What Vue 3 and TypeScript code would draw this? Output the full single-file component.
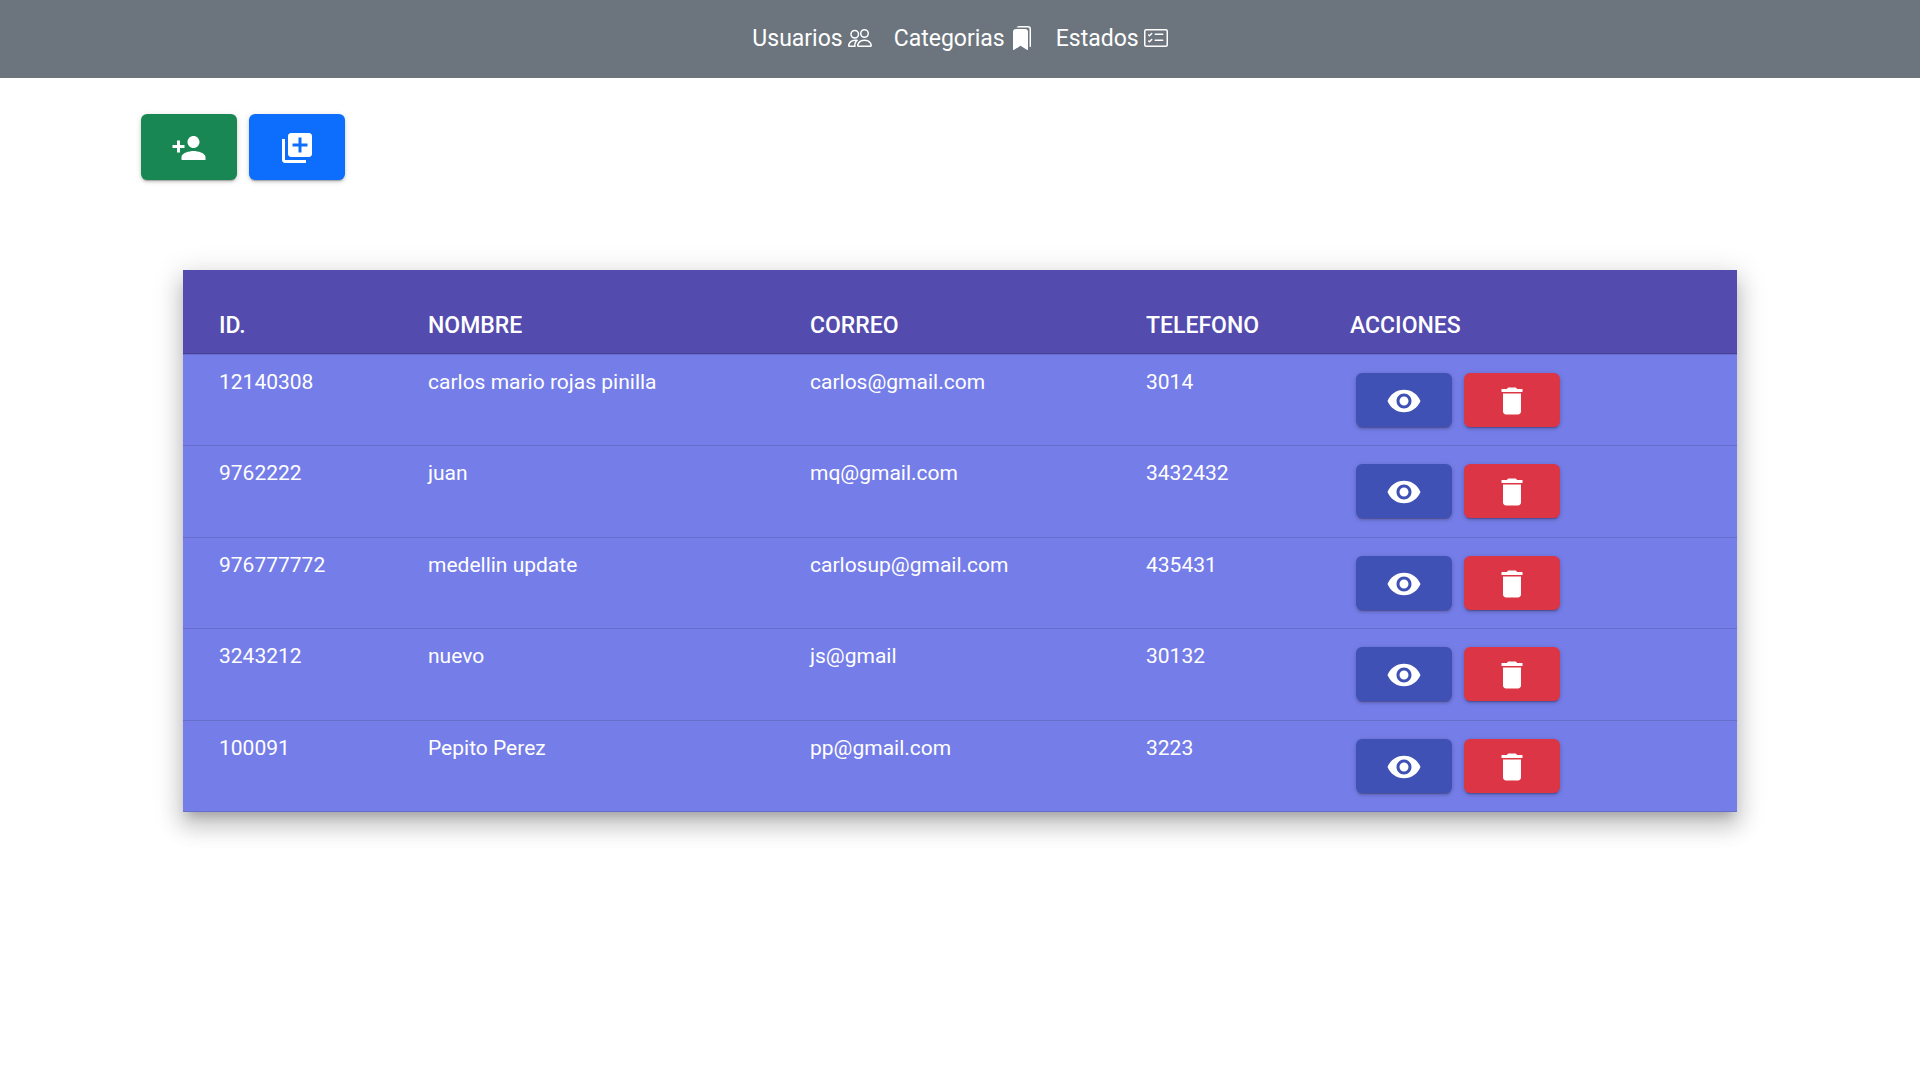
<script setup lang="ts">
interface Usuario {
  id: string
  nombre: string
  correo: string
  telefono: string
}

const usuarios: Usuario[] = [
  { id: '12140308', nombre: 'carlos mario rojas pinilla', correo: 'carlos@gmail.com', telefono: '3014' },
  { id: '9762222', nombre: 'juan', correo: 'mq@gmail.com', telefono: '3432432' },
  { id: '976777772', nombre: 'medellin update', correo: 'carlosup@gmail.com', telefono: '435431' },
  { id: '3243212', nombre: 'nuevo', correo: 'js@gmail', telefono: '30132' },
  { id: '100091', nombre: 'Pepito Perez', correo: 'pp@gmail.com', telefono: '3223' },
]
</script>

<template>
  <nav class="navbar">
    <a href="#usuarios" class="nav-link">
      Usuarios
      <svg class="nav-icon" viewBox="0 0 16 16" aria-hidden="true">
        <path fill="currentColor" d="M15 14s1 0 1-1-1-4-5-4-5 3-5 4 1 1 1 1h8zm-7.978-1A.261.261 0 0 1 7 12.996c.001-.264.167-1.030.760-1.720C8.312 10.629 9.282 10 11 10c1.717 0 2.687.630 3.240 1.276.593.690.758 1.457.760 1.720l-.008.002a.274.274 0 0 1-.014.002H7.022zM11 7a2 2 0 1 0 0-4 2 2 0 0 0 0 4zm3-2a3 3 0 1 1-6 0 3 3 0 0 1 6 0zM6.936 9.280a5.880 5.880 0 0 0-1.230-.247A7.350 7.350 0 0 0 5 9c-4 0-5 3-5 4 0 .667.333 1 1 1h4.216A2.238 2.238 0 0 1 5 13c0-1.010.377-2.042 1.090-2.904.243-.294.526-.569.846-.816zM4.920 10A5.493 5.493 0 0 0 4 13H1c0-.260.164-1.030.760-1.724.545-.636 1.492-1.256 3.160-1.275zM1.500 5.500a3 3 0 1 1 6 0 3 3 0 0 1-6 0zm3-2a2 2 0 1 0 0 4 2 2 0 0 0 0-4z" />
      </svg>
    </a>
    <a href="#categorias" class="nav-link">
      Categorias
      <svg class="nav-icon" viewBox="0 0 16 16" aria-hidden="true">
        <path fill="currentColor" d="M2 4a2 2 0 0 1 2-2h6a2 2 0 0 1 2 2v11.500a.5.5 0 0 1-.777.416L7 13.101l-4.223 2.815A.5.5 0 0 1 2 15.500V4z M4.268 1A2 2 0 0 1 6 0h6a2 2 0 0 1 2 2v11.500a.5.5 0 0 1-.777.416L13 13.768V2a1 1 0 0 0-1-1H4.268z" />
      </svg>
    </a>
    <a href="#estados" class="nav-link">
      Estados
      <svg class="nav-icon" viewBox="0 0 16 16" aria-hidden="true">
        <path fill="currentColor" d="M14.5 3a.5.5 0 0 1 .5.5v9a.5.5 0 0 1-.5.5h-13a.5.5 0 0 1-.5-.5v-9a.5.5 0 0 1 .5-.5h13zm-13-1A1.500 1.500 0 0 0 0 3.500v9A1.500 1.500 0 0 0 1.500 14h13a1.500 1.500 0 0 0 1.500-1.500v-9A1.500 1.500 0 0 0 14.500 2h-13z M7 5.500a.5.5 0 0 1 .5-.5h5a.5.5 0 0 1 0 1h-5a.5.5 0 0 1-.5-.5zm-1.496-.854a.5.5 0 0 1 0 .708l-1.500 1.500a.5.5 0 0 1-.708 0l-.5-.5a.5.5 0 1 1 .708-.708l.146.147 1.146-1.147a.5.5 0 0 1 .708 0zM7 9.500a.5.5 0 0 1 .5-.5h5a.5.5 0 0 1 0 1h-5a.5.5 0 0 1-.5-.5zm-1.496-.854a.5.5 0 0 1 0 .708l-1.500 1.500a.5.5 0 0 1-.708 0l-.5-.5a.5.5 0 0 1 .708-.708l.146.147 1.146-1.147a.5.5 0 0 1 .708 0z" />
      </svg>
    </a>
  </nav>

  <main class="page">
    <div class="toolbar">
      <button type="button" class="btn btn-tall btn-success" aria-label="Agregar usuario">
        <svg class="btn-icon" viewBox="0 0 24 24" aria-hidden="true">
          <path d="M15 12c2.210 0 4-1.790 4-4s-1.790-4-4-4-4 1.790-4 4 1.790 4 4 4zm-9-2V7H4v3H1v2h3v3h2v-3h3v-2H6zm9 4c-2.670 0-8 1.340-8 4v2h16v-2c0-2.660-5.330-4-8-4z" />
        </svg>
      </button>
      <button type="button" class="btn btn-tall btn-primary" aria-label="Agregar a la biblioteca">
        <svg class="btn-icon" viewBox="0 0 24 24" aria-hidden="true">
          <path d="M4 6H2v14c0 1.100.9 2 2 2h14v-2H4V6zm16-4H8c-1.100 0-2 .9-2 2v12c0 1.100.9 2 2 2h12c1.100 0 2-.9 2-2V4c0-1.100-.9-2-2-2zm-1 9h-4v4h-2v-4H9V9h4V5h2v4h4v2z" />
        </svg>
      </button>
    </div>

    <table class="users">
      <colgroup>
        <col class="col-id" />
        <col class="col-nombre" />
        <col class="col-correo" />
        <col class="col-telefono" />
        <col />
      </colgroup>
      <thead>
        <tr>
          <th scope="col">ID.</th>
          <th scope="col">NOMBRE</th>
          <th scope="col">CORREO</th>
          <th scope="col">TELEFONO</th>
          <th scope="col">ACCIONES</th>
        </tr>
      </thead>
      <tbody>
        <tr v-for="u in usuarios" :key="u.id">
          <td>{{ u.id }}</td>
          <td>{{ u.nombre }}</td>
          <td>{{ u.correo }}</td>
          <td>{{ u.telefono }}</td>
          <td>
            <div class="actions">
              <button type="button" class="btn btn-view" :aria-label="`Ver ${u.nombre}`">
                <svg class="btn-icon" viewBox="0 0 24 24" aria-hidden="true">
                  <path d="M12 4.500C7 4.500 2.730 7.610 1 12c1.730 4.390 6 7.500 11 7.500s9.270-3.110 11-7.500c-1.730-4.390-6-7.500-11-7.500zM12 17c-2.760 0-5-2.240-5-5s2.240-5 5-5 5 2.240 5 5-2.240 5-5 5zm0-8c-1.660 0-3 1.340-3 3s1.340 3 3 3 3-1.340 3-3-1.340-3-3-3z" />
                </svg>
              </button>
              <button type="button" class="btn btn-danger" :aria-label="`Eliminar ${u.nombre}`">
                <svg class="btn-icon" viewBox="0 0 24 24" aria-hidden="true">
                  <path d="M6 19c0 1.100.9 2 2 2h8c1.100 0 2-.9 2-2V7H6v12zM19 4h-3.500l-1-1h-5l-1 1H5v2h14V4z" />
                </svg>
              </button>
            </div>
          </td>
        </tr>
      </tbody>
    </table>
  </main>
</template>

<style>
body {
  background: #fff;
  font-family: Roboto, "Liberation Sans", sans-serif;
}
</style>

<style scoped>
.navbar {
  display: flex;
  justify-content: center;
  align-items: center;
  gap: 22px;
  height: 78px;
  background: #6c757d;
}

.nav-link {
  display: flex;
  align-items: center;
  gap: 5px;
  color: #fff;
  font-size: 23px;
  line-height: 36px;
  text-decoration: none;
}

.nav-icon {
  width: 24px;
  height: 24px;
  margin-bottom: 2px;
}

.page {
  padding-bottom: 60px;
}

.toolbar {
  display: flex;
  gap: 12px;
  padding: 36px 141px 0;
}

.btn {
  display: flex;
  justify-content: center;
  align-items: center;
  box-sizing: border-box;
  width: 96px;
  height: 54px;
  padding: 2px 0 0;
  border: 0;
  border-radius: 6px;
  color: #fff;
  cursor: pointer;
  box-shadow: 0 3px 1px -2px rgba(0, 0, 0, 0.2), 0 2px 3px 0 rgba(0, 0, 0, 0.14), 0 1px 6px 0 rgba(0, 0, 0, 0.12);
}

.btn-tall {
  height: 66px;
}

.btn-success {
  background: #198754;
}

.btn-primary {
  background: #0d6efd;
}

.btn-view {
  background: #3f51b5;
}

.btn-danger {
  background: #dc3545;
}

.btn-icon {
  width: 36px;
  height: 36px;
  fill: currentColor;
}

.users {
  width: calc(100% - 366px);
  margin: 90px 183px 0;
  border-collapse: separate;
  border-spacing: 0;
  table-layout: fixed;
  color: #fff;
  text-align: left;
  box-shadow: 0 8px 10px -5px rgba(0, 0, 0, 0.2), 0 14px 20px 2px rgba(0, 0, 0, 0.14), 0 6px 26px 5px rgba(0, 0, 0, 0.12);
}

.col-id {
  width: 245px;
}

.col-nombre {
  width: 382px;
}

.col-correo {
  width: 336px;
}

.col-telefono {
  width: 204px;
}

th,
td {
  box-sizing: border-box;
  padding: 0;
  border-bottom: 1px solid rgba(0, 0, 0, 0.12);
}

th:first-child,
td:first-child {
  padding-left: 36px;
}

th {
  height: 84px;
  padding-bottom: 12px;
  background: #534bae;
  font-size: 23px;
  font-weight: 500;
  line-height: 30px;
  vertical-align: bottom;
}

td {
  height: 91px;
  padding-top: 12px;
  background: #757de8;
  font-size: 21px;
  line-height: 30px;
  vertical-align: top;
}

tr:nth-child(even) td,
tbody tr:first-child td {
  height: 92px;
}

tbody tr:first-child td {
  border-top: 1px solid rgba(0, 0, 0, 0.12);
}

.actions {
  display: flex;
  gap: 12px;
  padding: 6px;
}
</style>
